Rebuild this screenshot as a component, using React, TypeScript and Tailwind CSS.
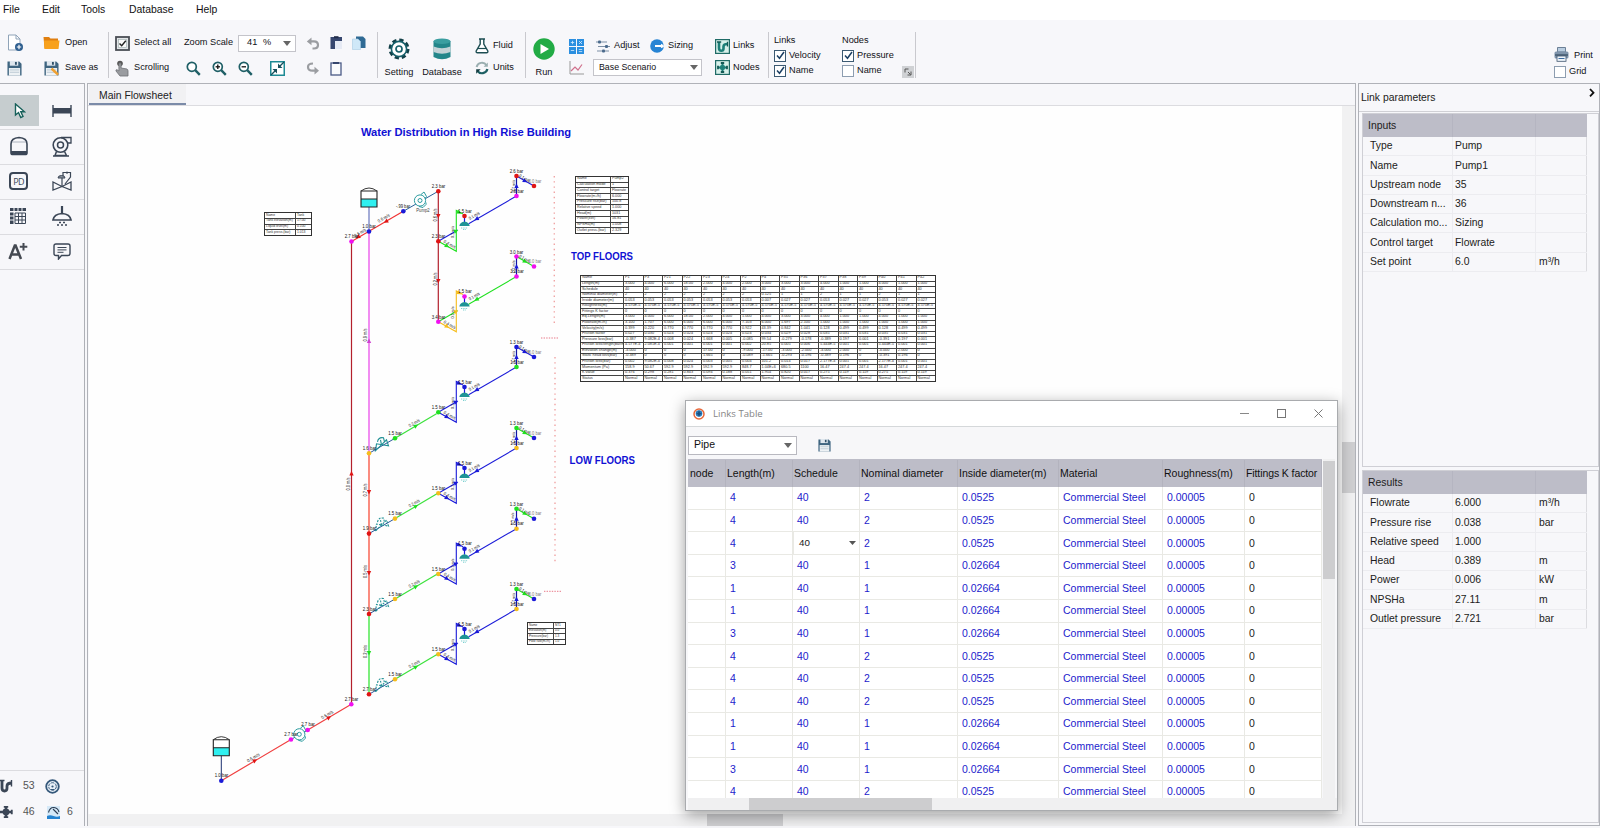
import React from "react";

const NAVY = "#3b4656";
const TEAL = "#1f5f66";

/* ---------- toolbar icons ---------- */

function Svg({ w, h, vb, children }: { w: number; h: number; vb?: string; children: React.ReactNode }) {
  return (
    <svg width={w} height={h} viewBox={vb ?? `0 0 ${w} ${h}`} fill="none" className="shrink-0">
      {children}
    </svg>
  );
}

const Floppy = ({ pencil = false, size = 15 }: { pencil?: boolean; size?: number }) => (
  <Svg w={size} h={size} vb="0 0 16 16">
    <path d="M0.5 0.5H13L15.5 3V15.5H0.5Z" fill="#3f6580" />
    <rect x="3" y="0" width="9" height="5" fill="#dfe7ee" />
    <rect x="8.5" y="1" width="2" height="3" fill="#2f5068" />
    <rect x="2" y="7.5" width="12" height="8" fill="#eef2f5" />
    <path d="M3 9.5H13M3 12H13" stroke="#b9c8d2" />
    {pencil && <path d="M8 8L15 14.5" stroke="#f0a030" strokeWidth="2.6" />}
  </Svg>
);

const NewFile = () => (
  <Svg w={17} h={18}>
    <path d="M1.5 1H9L13 5V16H1.5Z" fill="#fff" stroke="#8fa3b8" />
    <path d="M9 1V5H13" stroke="#8fa3b8" />
    <circle cx="12" cy="13" r="4" fill="#2f5f8f" />
    <path d="M12 10.8V15.2M9.8 13H14.2" stroke="#fff" strokeWidth="1.2" />
  </Svg>
);

const Folder = () => (
  <Svg w={17} h={14}>
    <path d="M0.5 1H6L7.5 2.5H15V12.5H1.5Z" fill="#e07f10" />
    <path d="M1.5 13L1 4.5H16.5L15.5 13Z" fill="#f8a11c" />
  </Svg>
);

const SelectAllIcon = () => (
  <Svg w={15} h={15}>
    <rect x="1" y="1" width="13" height="13" fill="#e3e5e8" stroke="#4a4e55" strokeWidth="1.8" />
    <rect x="3.5" y="3.5" width="8" height="8" fill="#fafafa" stroke="#9aa" strokeWidth="0.6" />
    <path d="M4.5 7.5L6.7 9.8L10.8 4.8" stroke="#222" strokeWidth="1.4" />
  </Svg>
);

const HandIcon = () => (
  <Svg w={14} h={17}>
    <circle cx="5" cy="3.5" r="2.8" fill="#555" />
    <path d="M3.9 3.5Q5 2 6.1 3.5V8L12 9Q13 9.5 13 11V16H5L1 11Q0.5 9.5 2 9.7L3.9 11Z" fill="#9a9ca0" stroke="#6d7075" strokeWidth="0.8" />
  </Svg>
);

const Magnifier = ({ sign }: { sign?: "+" | "-" }) => (
  <Svg w={15} h={15}>
    <circle cx="5.8" cy="5.8" r="4.5" stroke={TEAL} strokeWidth="1.7" fill="#fff" />
    <path d="M9.2 9.2L13.8 13.8" stroke={TEAL} strokeWidth="2.4" />
    {sign && <path d="M3.6 5.8H8" stroke="#111" strokeWidth="1.3" />}
    {sign === "+" && <path d="M5.8 3.6V8" stroke="#111" strokeWidth="1.3" />}
  </Svg>
);

const FitIcon = () => (
  <Svg w={15} h={15}>
    <rect x="0.75" y="0.75" width="13.5" height="13.5" stroke="#1d8a94" strokeWidth="1.5" fill="#fff" />
    <path d="M14 1L9.5 5.5M1 14L5.5 9.5" stroke="#174f5c" strokeWidth="1.4" />
    <path d="M8 2.5V7H12.5ZM2.5 8H7V12.5Z" fill="#174f5c" />
  </Svg>
);

const CurveArrow = ({ redo = false }: { redo?: boolean }) => (
  <Svg w={14} h={13}>
    {redo ? (
      <>
        <path d="M7 1.5Q2 1.5 2 5Q2 8.7 6.5 8.7H9.5" stroke="#9b9da1" strokeWidth="2.2" />
        <path d="M8.5 4.8V12.6L13 8.7Z" fill="#9b9da1" />
      </>
    ) : (
      <>
        <path d="M4 4.4H8Q12 4.4 12 8Q12 11.5 8 11.5H6.5" stroke="#9b9da1" strokeWidth="2.2" />
        <path d="M5.5 0.5V8.3L0.8 4.4Z" fill="#9b9da1" />
      </>
    )}
  </Svg>
);

const Cut = () => (
  <Svg w={13} h={14}>
    <path d="M0.5 1H12V5H5V13H0.5Z" fill="#36466e" />
    <rect x="4" y="0.2" width="4.5" height="2" fill="#202b48" />
    <path d="M5 5H12V13H5Z" fill="#e6eaf4" />
  </Svg>
);
const Copy = () => (
  <Svg w={14} h={14}>
    <path d="M4 0.5H11L13.5 3V12H4Z" fill="#2f6a94" />
    <path d="M0.5 3H6L8.5 5.5V13.5H0.5Z" fill="#cfe8f8" stroke="#a8cbe2" strokeWidth="0.6" />
  </Svg>
);
const Paste = () => (
  <Svg w={12} h={15}>
    <rect x="1" y="2" width="10" height="12" stroke="#4a5a86" strokeWidth="1.3" fill="#fafbfd" />
    <rect x="3" y="1" width="6" height="2" fill="#36466e" />
  </Svg>
);

const Gear = () => (
  <Svg w={22} h={22}>
    <circle cx="11" cy="11" r="9" stroke="#123f47" strokeWidth="3" strokeDasharray="4.2 2.87" />
    <circle cx="11" cy="11" r="7.6" stroke="#17606a" strokeWidth="1.6" fill="#fff" />
    <circle cx="11" cy="11" r="3" stroke="#17606a" strokeWidth="1.7" />
  </Svg>
);

const Cylinder = () => (
  <Svg w={18} h={22}>
    <path d="M0.5 3V19Q9 23.5 17.5 19V3Z" fill="#23868a" />
    <ellipse cx="9" cy="3.2" rx="8.5" ry="2.8" fill="#3a9ea0" />
    <path d="M0.5 8.5Q9 12 17.5 8.5V14Q9 17.5 0.5 14Z" fill="#c3d2d6" />
  </Svg>
);

const Flask = () => (
  <Svg w={14} h={16}>
    <path d="M4 1H10M5.2 1V6L1.2 13Q0.8 14.8 2.5 14.8H11.5Q13.2 14.8 12.8 13L8.8 6V1" stroke="#1d4d52" strokeWidth="1.4" fill="#fff" />
    <path d="M3 10.5H11" stroke="#1d4d52" strokeWidth="1.2" />
  </Svg>
);

const Cycle = () => (
  <Svg w={14} h={14}>
    <path d="M1.6 6A5.5 5.5 0 0 1 11.5 4.2" stroke="#9aaeb0" strokeWidth="2" />
    <path d="M12.4 8A5.5 5.5 0 0 1 2.5 9.8" stroke="#1d5f62" strokeWidth="2.2" />
    <path d="M12.8 1.5V5.8H8.6Z" fill="#9aaeb0" />
    <path d="M1.2 12.8V8.3H5.6Z" fill="#143c40" />
  </Svg>
);

const Calc = () => (
  <Svg w={15} h={15}>
    <path d="M0 0H7V7H0ZM8 0H15V7H8ZM0 8H7V15H0ZM8 8H15V15H8Z" fill="#2b8fe0" />
    <path d="M1.8 3.5H5.2M3.5 1.8V5.2M10 2L13 5M13 2L10 5M1.8 11.5H5.2M9.8 10.5H13.2M9.8 12.6H13.2" stroke="#d8ecfc" strokeWidth="0.8" />
  </Svg>
);

const ChartIcon = () => (
  <Svg w={15} h={14}>
    <path d="M1 0V13H15" stroke="#999" />
    <path d="M2 10L6 6L9 9L13 3.5" stroke="#d0708c" strokeWidth="1.2" />
  </Svg>
);

const Sliders = () => (
  <Svg w={14} h={13}>
    <path d="M0 2H11M2 6.5H14M1 11H13" stroke="#7d90a6" strokeWidth="1.2" />
    <rect x="2" y="0.5" width="3" height="3" rx="1" fill="#4b6a8c" />
    <rect x="9" y="5" width="3" height="3" rx="1" fill="#4b6a8c" />
    <rect x="6" y="9.5" width="3" height="3" rx="1" fill="#4b6a8c" />
  </Svg>
);

const PipeBox = () => (
  <Svg w={15} h={15}>
    <rect x="0.6" y="0.6" width="13.8" height="13.8" fill="#d7f0ea" stroke="#1f6b66" strokeWidth="1.2" />
    <path d="M4 3V9Q4 11.8 6.3 11.8Q8.5 11.8 8.5 9.5V7.5Q8.5 5 12.5 5" stroke="#1d7f78" strokeWidth="2.6" />
    <path d="M2 3H6.2M12.5 2.8V7.5" stroke="#145a56" strokeWidth="1.3" />
  </Svg>
);

const NodeBox = () => (
  <Svg w={15} h={15}>
    <rect x="0.6" y="0.6" width="13.8" height="13.8" fill="#d7f0ea" stroke="#1f6b66" strokeWidth="1.2" />
    <circle cx="7.5" cy="7.5" r="2.8" fill="#2a9088" />
    <path d="M7.5 3V12M3 7.5H12" stroke="#1d7f78" strokeWidth="2" />
    <path d="M5.8 3H9.2M5.8 12H9.2M3 5.8V9.2M12 5.8V9.2" stroke="#145a56" strokeWidth="1.8" />
  </Svg>
);

const Printer = () => (
  <Svg w={15} h={15}>
    <path d="M3.5 0.5H11.5V5H3.5Z" fill="#b9cde0" stroke="#51677f" strokeWidth="0.8" />
    <rect x="0.5" y="4.5" width="14" height="7" rx="1.5" fill="#7f94ab" />
    <path d="M1 8H14" stroke="#41566c" strokeWidth="1.4" />
    <rect x="3" y="9" width="9" height="5.3" fill="#eef4fa" stroke="#3f566e" strokeWidth="0.8" />
    <path d="M4.5 11.5H10.5" stroke="#3a6aa0" />
  </Svg>
);

const Caret = () => (
  <svg width="8" height="5" viewBox="0 0 8 5" className="shrink-0">
    <path d="M0 0H8L4 5Z" fill="#666" />
  </svg>
);

function Check({ on }: { on?: boolean }) {
  return (
    <span className={`flex h-[12px] w-[12px] shrink-0 items-center justify-center border bg-white ${on ? "border-[#3c5a72]" : "border-[#8d9db0]"}`}>
      {on && (
        <Svg w={9} h={9}>
          <path d="M1 4.5L3.5 7.2L8 1" stroke="#1c3f63" strokeWidth="1.5" />
        </Svg>
      )}
    </span>
  );
}

const Divider = () => <div className="mt-[12px] h-[46px] w-px shrink-0 bg-[#c9c9ce]" />;

/* Two stacked rows of a ribbon group; tight groups have their rows closer together */
function Stack({ w, a, b, tight }: { w: string; a: React.ReactNode; b: React.ReactNode; tight?: boolean }) {
  return (
    <div className={`grid shrink-0 ${tight ? "grid-rows-[22px_21px] pt-[15px]" : "grid-rows-[25px_25px] pt-[10.5px]"} ${w}`}>
      <div className="flex items-center">{a}</div>
      <div className="flex items-center">{b}</div>
    </div>
  );
}

const Slot = ({ w, children }: { w: string; children: React.ReactNode }) => (
  <span className={`flex shrink-0 items-center ${w}`}>{children}</span>
);

function Big({ w, icon, label }: { w: string; icon: React.ReactNode; label: string }) {
  return (
    <div className={`flex shrink-0 flex-col items-center pt-[18px] ${w}`}>
      <div className="flex h-[22px] items-center">{icon}</div>
      <span className="mt-[6px] leading-[12px] tracking-[0.05px]">{label}</span>
    </div>
  );
}

function Ribbon() {
  return (
    <div className="flex h-[63px] shrink-0 whitespace-nowrap text-[9.2px] text-[#111116]">
      <Stack w="w-[43px] pl-[7px]" a={<NewFile />} b={<Floppy />} />
      <Stack
        w="w-[65px]"
        a={<><Slot w="w-[22px]"><Folder /></Slot>Open</>}
        b={<><Slot w="w-[22px] pl-[1px]"><Floppy pencil /></Slot>Save as</>}
      />
      <Divider />
      <Stack
        w="w-[75px] pl-[6px]"
        a={<><Slot w="w-[19px]"><SelectAllIcon /></Slot>Select all</>}
        b={<><Slot w="w-[19px]"><HandIcon /></Slot>Scrolling</>}
      />
      <Stack
        w="w-[122px]"
        a={
          <>
            <Slot w="w-[54px]">Zoom Scale</Slot>
            <div className="flex h-[17px] w-[58px] items-center justify-between border border-[#c4c4ca] bg-white pl-[8px] pr-[4px]">
              <span className="tracking-[0.2px]">41&nbsp; %</span>
              <Caret />
            </div>
          </>
        }
        b={
          <>
            <Slot w="w-[26px] pl-[2px]"><Magnifier /></Slot>
            <Slot w="w-[26px] pl-[2px]"><Magnifier sign="+" /></Slot>
            <Slot w="w-[34px] pl-[2px]"><Magnifier sign="-" /></Slot>
            <FitIcon />
          </>
        }
      />
      <Stack
        w="w-[71px]"
        a={<><Slot w="w-[24px]"><CurveArrow /></Slot><Slot w="w-[22px]"><Cut /></Slot><Copy /></>}
        b={<><Slot w="w-[24px]"><CurveArrow redo /></Slot><Paste /></>}
      />
      <Divider />
      <Big w="w-[42px]" icon={<Gear />} label="Setting" />
      <Big w="w-[44px]" icon={<Cylinder />} label="Database" />
      <Stack
        tight
        w="w-[61px] pl-[11px]"
        a={<><Slot w="w-[18px]"><Flask /></Slot>Fluid</>}
        b={<><Slot w="w-[18px]"><Cycle /></Slot>Units</>}
      />
      <Divider />
      <Big
        w="w-[36px]"
        icon={
          <Svg w={22} h={22}>
            <circle cx="11" cy="11" r="10.7" fill="#22ab45" />
            <path d="M7.5 6L16 11L7.5 16Z" fill="#fff" />
          </Svg>
        }
        label="Run"
      />
      <Stack tight w="w-[24px] pl-[7px]" a={<Calc />} b={<ChartIcon />} />
      <Stack
        tight
        w="w-[128px] pl-[7px]"
        a={
          <>
            <Slot w="w-[20px] pl-[3px]"><Sliders /></Slot>
            <Slot w="w-[37px] pl-[1px]">Adjust</Slot>
            <Slot w="w-[18px]">
              <Svg w={14} h={14}>
                <circle cx="7" cy="7" r="6.8" fill="#2784d4" />
                <path d="M5 7H13M11 5.5L13 7L11 8.5" stroke="#fff" strokeWidth="1.8" />
              </Svg>
            </Slot>
            Sizing
          </>
        }
        b={
          <div className="flex h-[17px] w-[109px] items-center justify-between border border-[#c4c4ca] bg-white pl-[5px] pr-[3px] text-[8.8px]">
            Base Scenario
            <Caret />
          </div>
        }
      />
      <Stack
        tight
        w="w-[54px] pl-[1px]"
        a={<><Slot w="w-[18px]"><PipeBox /></Slot>Links</>}
        b={<><Slot w="w-[18px]"><NodeBox /></Slot>Nodes</>}
      />
      <Divider />
      <div className="grid w-[69px] shrink-0 grid-rows-[15px_15px_15px] pl-[5px] pt-[13px]">
        <div className="flex items-center">Links</div>
        <div className="flex items-center gap-[3px]"><Check on />Velocity</div>
        <div className="flex items-center gap-[3px]"><Check on />Name</div>
      </div>
      <div className="grid w-[59px] shrink-0 grid-rows-[15px_15px_15px] pt-[13px] pl-[4px]">
        <div className="flex items-center">Nodes</div>
        <div className="flex items-center gap-[3px]"><Check on />Pressure</div>
        <div className="flex items-center gap-[3px]"><Check />Name</div>
      </div>
      <div className="flex w-[18px] shrink-0 items-start pt-[46px] pl-[5px]">
        <span className="flex h-[12px] w-[12px] items-center justify-center bg-[#cfd1d4]">
          <Svg w={8} h={8}>
            <path d="M1 4.5V1H4.5M7 3.5V7H3.5M4 4L6.5 6.5" stroke="#555" />
          </Svg>
        </span>
      </div>
      <Divider />
      <div className="flex-1" />
      <div className="grid w-[48px] shrink-0 grid-rows-[17px_16px] pt-[26px] pl-[2px]">
        <div className="flex items-center gap-[5px]"><Printer /><span className="pt-[3px]">Print</span></div>
        <div className="flex items-center gap-[3px] pt-[2px]"><Check />Grid</div>
      </div>
    </div>
  );
}

/* ---------- left tool palette ---------- */

const tools: React.ReactNode[][] = [
  [
    <Svg w={12} h={16}>
      <path d="M1.5 1V12L4.5 9.5L6.8 14.5L9 13.5L6.8 8.8H10.5Z" fill="#fff" stroke="#17605a" strokeWidth="1.4" />
    </Svg>,
    <Svg w={20} h={14}>
      <path d="M1 1V13M19 1V13" stroke={NAVY} strokeWidth="1.4" />
      <rect x="1" y="4" width="18" height="5.5" fill={NAVY} />
    </Svg>,
  ],
  [
    <Svg w={18} h={20}>
      <path d="M1 17V8Q1 2 9 1.5Q17 2 17 8V17Q17 18.5 15 18.5H3Q1 18.5 1 17Z" stroke={NAVY} strokeWidth="1.6" />
      <path d="M2 6H16" stroke="#9aa2ad" strokeWidth="0.8" />
      <rect x="1" y="15" width="16" height="3.8" fill={NAVY} />
    </Svg>,
    <Svg w={20} h={21}>
      <circle cx="8.5" cy="9" r="7.3" stroke={NAVY} strokeWidth="1.6" />
      <circle cx="8.5" cy="9" r="3" stroke={NAVY} strokeWidth="1.5" />
      <path d="M9 1.5H19V7H15" stroke={NAVY} strokeWidth="1.3" />
      <path d="M4.5 15.5L3 19.5H14.5L12.5 15.5M1 20H17" stroke={NAVY} strokeWidth="1.5" />
    </Svg>,
  ],
  [
    <span className="flex h-[18px] w-[19px] items-center justify-center rounded-[4px] border-2 border-[#3b4656] font-['Open_Sans',sans-serif] text-[9px] leading-none tracking-[-0.6px] text-[#3b4656]">PD</span>,
    <Svg w={20} h={20}>
      <path d="M1 11V19L10 15.5L19 11V19L10 15.5Z" stroke={NAVY} strokeWidth="1.3" />
      <path d="M10 15V6.5M11 5V1.5H18.5V6L13 13" stroke={NAVY} strokeWidth="1.2" />
      <path d="M6 7Q6 4.5 9.5 4.5Q13 4.5 13 7Z" fill="#8b939e" stroke={NAVY} />
      <path d="M15 0.5V3" stroke={NAVY} />
    </Svg>,
  ],
  [
    <Svg w={17} h={17}>
      <path d="M0 0H3.5V3H0ZM4.5 0H7.5V3H4.5ZM8.5 0H11.5V3H8.5ZM12.5 0H16V3H12.5ZM0 4.5H3.5V7.5H0ZM0 8.5H3.5V11.5H0ZM0 12.5H3.5V16H0Z" fill={NAVY} />
      <path d="M5 5H15.5V15.5H5ZM8.5 5V15.5M12 5V15.5M5 8.5H15.5M5 12H15.5" stroke={NAVY} />
    </Svg>,
    <Svg w={20} h={20}>
      <path d="M10 0V8" stroke={NAVY} strokeWidth="2.2" />
      <path d="M1 14Q2 8 10 7.5Q18 8 19 14Z" stroke={NAVY} strokeWidth="1.7" />
      <path d="M7 16.5H9M11 16.5H13M5 19H7M9 19H11M13 19H15" stroke={NAVY} strokeWidth="1.4" />
    </Svg>,
  ],
  [
    <Svg w={21} h={18}>
      <path d="M1.5 17L6.8 3.5H7.6L13 17M3.6 12.5H10.8" stroke="#454a52" strokeWidth="2.5" />
      <path d="M15.5 1V8.5M11.8 4.7H19.3" stroke="#454a52" strokeWidth="2" />
    </Svg>,
    <Svg w={18} h={17}>
      <path d="M3 1H15Q17 1 17 3V10.5Q17 12.5 15 12.5H8.5L5.5 16V12.5H3Q1 12.5 1 10.5V3Q1 1 3 1Z" stroke={NAVY} strokeWidth="1.4" />
      <path d="M4.5 4.5H13.5M4.5 6.9H13.5M4.5 9.3H10.5" stroke={NAVY} strokeWidth="1" />
    </Svg>,
  ],
];

function Palette() {
  return (
    <aside className="flex w-[85px] shrink-0 flex-col border-r border-t border-[#aeb0b6] text-[10.5px] text-[#555]">
      <div className="pt-[10px]">
        {tools.map((row, i) => (
          <div key={i} className={`flex w-full border-b border-[#dcdce0] ${i === 0 ? "h-[36px]" : "h-[35px]"}`}>
            <div className={`flex w-[39px] items-center justify-center ${i === 0 ? "mt-px h-[31px] bg-[#c6cdcf] pt-px pl-px" : "pb-[2px] pr-[2px]"}`}>{row[0]}</div>
            <div className="flex w-[45px] items-center justify-center pb-[2px]">{row[1]}</div>
          </div>
        ))}
      </div>
      <div className="flex-1" />
      <div className="grid h-[56px] grid-rows-[30px_22px] border-t border-[#dcdce0]">
        <div className="flex items-center">
          <Slot w="w-[23px]">
            <Svg w={13} h={14}>
              <path d="M2 2V9Q2 12 4.5 12Q7 12 7 9V7Q7 4 12 4" stroke={NAVY} strokeWidth="2.8" />
              <path d="M0 1.5H4.5M11.5 1V7.5" stroke={NAVY} strokeWidth="1.4" />
            </Svg>
          </Slot>
          <Slot w="w-[22px]">53</Slot>
          <Svg w={15} h={15}>
            <circle cx="7.5" cy="7.5" r="6.3" stroke="#35587a" strokeWidth="1.8" fill="#e8f0f8" />
            <circle cx="7.5" cy="7.5" r="3.8" stroke="#35587a" strokeWidth="1" strokeDasharray="3 1" />
            <circle cx="7.5" cy="7.5" r="1.1" fill="#35587a" />
            <path d="M5.5 10.5H9.5" stroke="#35587a" />
          </Svg>
        </div>
        <div className="flex items-center">
          <Slot w="w-[23px]">
            <Svg w={14} h={14}>
              <circle cx="6" cy="7" r="3.4" fill={NAVY} />
              <path d="M6 1.5V12.5M0 7H12" stroke={NAVY} strokeWidth="2.4" />
              <path d="M3.8 1.8H8.2M3.8 12.2H8.2M11.8 4.8V9.2" stroke={NAVY} strokeWidth="1.8" />
            </Svg>
          </Slot>
          <Slot w="w-[24px]">46</Slot>
          <Slot w="w-[20px]">
            <Svg w={13} h={13}>
              <rect width="13" height="13" fill="#d5e9f8" />
              <path d="M0 10Q3 8.5 6.5 10Q10 11.5 13 10V13H0Z" fill="#2583d0" />
              <path d="M1.5 6.5Q3 1 7 1.5Q11 2 12 6M6 3L11 8" stroke="#2c3e54" strokeWidth="1.1" />
            </Svg>
          </Slot>
          6
        </div>
      </div>
    </aside>
  );
}

/* ---------- flowsheet drawing ---------- */

const BLUE = "#1a1ad8";
const GREEN = "#1fe01f";
const MAG = "#f010f0";
const RED = "#e01414";
const GOLD = "#f5bd1c";

const Dot = ({ x, y, c }: { x: number; y: number; c: string }) => <circle cx={x} cy={y} r="2.3" fill={c} />;

function T({ x, y, s, r = 0, w, c = "#111", size = 4.6 }: { x: number; y: number; s: string; r?: number; w?: number; c?: string; size?: number }) {
  return (
    <text x={x} y={y} fontSize={size} fill={c} textAnchor="middle" textLength={w} lengthAdjust="spacingAndGlyphs" transform={r ? `rotate(${r} ${x} ${y})` : undefined}>
      {s}
    </text>
  );
}

const Arrow = ({ x, y, r, c }: { x: number; y: number; r: number; c: string }) => (
  <path d="M-2 -2.2L2.4 0L-2 2.2Z" fill={c} transform={`translate(${x} ${y}) rotate(${r})`} />
);

const Tank = ({ x, y }: { x: number; y: number }) => (
  <g>
    <path d={`M${x} ${y + 3}Q${x + 8} ${y - 3} ${x + 16} ${y + 3}`} stroke="#222" strokeWidth="0.9" fill="#fff" />
    <rect x={x} y={y + 3} width="16" height="16" fill="#fff" />
    <rect x={x} y={y + 11} width="16" height="8" fill="#2ff0f0" />
    <path d={`M${x} ${y + 3}H${x + 16}V${y + 19}H${x}ZM${x} ${y + 11}H${x + 16}`} stroke="#222" strokeWidth="1.1" />
  </g>
);

const PumpMark = ({ x, y }: { x: number; y: number }) => (
  <g stroke="#2b9ca0" strokeWidth="1" fill="none">
    <circle cx={x} cy={y} r="5.6" fill="#fff" />
    <circle cx={x} cy={y} r="2" />
    <path d={`M${x + 1} ${y - 6}L${x + 4} ${y - 8.5}L${x + 6.5} ${y - 4}L${x + 5} ${y - 2}M${x - 1} ${y + 6}L${x + 3} ${y + 7}L${x + 6} ${y + 4}V${y + 2}`} />
  </g>
);

const ValveMark = ({ x, y, dash }: { x: number; y: number; dash?: boolean }) => (
  <g stroke="#1f9094" strokeWidth="1.1" fill="none" strokeDasharray={dash ? "2 1.2" : undefined}>
    <path d={`M${x - 6} ${y + 6}L${x - 5} ${y - 1}L${x + 7} ${y + 1}L${x + 5} ${y - 5}Z`} />
    <path d={`M${x} ${y}L${x - 1} ${y - 5}M${x - 4} ${y - 3}Q${x - 3} ${y - 8} ${x + 2} ${y - 7}L${x + 3} ${y - 3}`} />
  </g>
);

interface Branch {
  y: number;
  main: string;
  tri: string;
  tip: string;
  tipLink: string;
  base: string;
  end: string;
  root: string;
  spr: string;
  p: string[];
}

const branches: Branch[] = [
  { y: 176, main: BLUE, tri: GREEN, tip: RED, tipLink: BLUE, base: MAG, end: RED, root: RED, spr: RED, p: ["2.6 bar", "2.8 bar", "2.3 bar"] },
  { y: 256.5, main: GREEN, tri: GOLD, tip: MAG, tipLink: GREEN, base: MAG, end: MAG, root: MAG, spr: MAG, p: ["3.0 bar", "3.2 bar", "3.4 bar"] },
  { y: 347, main: BLUE, tri: BLUE, tip: BLUE, tipLink: BLUE, base: GREEN, end: BLUE, root: GREEN, spr: BLUE, p: ["1.3 bar", "1.5 bar", "1.5 bar"] },
  { y: 428, main: BLUE, tri: BLUE, tip: GREEN, tipLink: GREEN, base: GOLD, end: BLUE, root: GOLD, spr: BLUE, p: ["1.3 bar", "1.5 bar", "1.5 bar"] },
  { y: 508.7, main: BLUE, tri: BLUE, tip: GREEN, tipLink: GREEN, base: GOLD, end: BLUE, root: GOLD, spr: BLUE, p: ["1.3 bar", "1.5 bar", "1.5 bar"] },
  { y: 589, main: BLUE, tri: BLUE, tip: GREEN, tipLink: GREEN, base: GOLD, end: BLUE, root: GOLD, spr: BLUE, p: ["1.3 bar", "1.5 bar", "1.5 bar"] },
];

function BranchMark({ b }: { b: Branch }) {
  const y = b.y;
  return (
    <g>
      <path d={`M438.3 ${y + 65.3}L516.5 ${y + 20}`} stroke={b.main} strokeWidth="1.1" />
      <rect x="457.5" y={y + 42} width="11" height="14" fill="#fff" />
      <path d={`M438.3 ${y + 65.3}L456.3 ${y + 75.3}V${y + 34.5}L463 ${y + 38}`} stroke={b.tri} strokeWidth="1.1" fill="none" />
      <path d={`M516.5 ${y + 20}V${y}`} stroke="#1414a0" strokeWidth="1.2" />
      <path d={`M516.5 ${y}L534 ${y + 10}`} stroke={b.tipLink} strokeWidth="1.1" />
      <Arrow x={525} y={y + 5} r={30} c={b.tipLink} />
      <Arrow x={516.5} y={y + 10} r={-90} c={BLUE} />
      <Arrow x={456} y={y + 55} r={-20} c={b.tri} />
      <Arrow x={447} y={y + 70} r={30} c={b.tri} />
      <Arrow x={476.5} y={y + 43} r={150} c={b.main} />
      <Arrow x={459} y={y + 36.5} r={30} c={b.tri} />
      <path d={`M464.5 ${y + 40}V${y + 46}`} stroke={BLUE} strokeWidth="1.2" />
      <path d={`M459.3 ${y + 50}Q460 ${y + 46} 464.5 ${y + 45.5}Q469 ${y + 46} 469.7 ${y + 50}Z`} fill="#1f9496" />
      <path d={`M461 ${y + 52}H468M463 ${y + 53.5}H466`} stroke="#5cc4c4" strokeWidth="0.8" strokeDasharray="1.3 1" />
      <Dot x={516.5} y={y} c={b.tip} />
      <Dot x={516.5} y={y + 20} c={b.base} />
      <Dot x={534} y={y + 10} c={b.end} />
      <Dot x={438.3} y={y + 65.3} c={b.root} />
      <Dot x={464.5} y={y + 40} c={b.spr} />
      <T x={516.5} y={y - 3} s={b.p[0]} w={13.5} />
      <T x={517} y={y + 16.5} s={b.p[1]} w={13.5} />
      <T x={438.5} y={y + 62} s={b.p[2]} w={13.5} />
      <T x={465} y={y + 36.5} s="1.5 bar" w={13.5} />
      <T x={535} y={y + 6.5} s="0.0 bar" w={12.5} c="#777" />
      <T x={524} y={y + 3.5} s="0.1 m/s" w={12} r={30} size={4.2} />
      <T x={514.5} y={y + 10} s="0.7 m/s" w={12} r={-90} size={4.4} />
      <T x={475} y={y + 41} s="0.1 m/s" w={12} r={-30} size={4.4} />
      <T x={454.3} y={y + 56} s="0.1 m/s" w={12} r={-90} size={4.4} />
      <T x={449} y={y + 69.5} s="0.4 m/s" w={13} r={30} size={4.4} />
    </g>
  );
}

const feeds = [
  { y: 453.3, n: GOLD, m: GREEN, label: "1.6 bar" },
  { y: 533.6, n: RED, m: GOLD, label: "1.9 bar" },
  { y: 614, n: RED, m: GOLD, label: "2.3 bar" },
  { y: 694.3, n: RED, m: GOLD, label: "2.7 bar" },
];

function Diagram() {
  return (
    <svg width="1253" height="709" viewBox="89 105 1253 709" fill="none" fontFamily="'Liberation Sans', Arial, sans-serif" className="block">
      <g fontWeight="700" fill="#1010d4">
        <text x="361" y="136" fontSize="11.2" textLength="210">Water Distribution in High Rise Building</text>
        <text x="571" y="260" fontSize="10.6" textLength="62" lengthAdjust="spacingAndGlyphs">TOP FLOORS</text>
        <text x="569.5" y="464.2" fontSize="10.6" textLength="65.5" lengthAdjust="spacingAndGlyphs">LOW FLOORS</text>
      </g>
      <g stroke="#f0a4a4" strokeWidth="1.4" strokeDasharray="1.4 3.8">
        <path d="M554.3 176V323M555 357V565" />
        <path d="M541 338H558M544 591.3H562" stroke="#e87888" strokeWidth="1" strokeDasharray="1.4 1.2" />
      </g>

      <path d="M351.5 241.5V704.3" stroke="#b3202c" strokeWidth="1.2" />
      <path d="M369 231.5V453.3" stroke="#ee70ee" strokeWidth="1.6" />
      <path d="M369 453.3V614" stroke="#fa7f72" strokeWidth="1.8" />
      <path d="M369 614V694.3" stroke="#5cea5c" strokeWidth="1.6" />
      <path d="M438.3 191.2V322" stroke="#b3202c" strokeWidth="1.2" />
      <path d="M369 207V231.5" stroke="#4a5ab0" strokeWidth="1" />
      <path d="M351.5 241.5L403.3 211.3" stroke="#f03434" strokeWidth="1.2" />
      <path d="M403.3 211.3L438.3 191.2" stroke="#2a5f98" strokeWidth="1" />
      <path d="M221.3 780.7L291 739.5M307.7 730L351.3 704.3" stroke="#f04040" strokeWidth="1.2" />
      <path d="M291 739.5L307.7 730" stroke="#2a5f98" strokeWidth="1" />
      <path d="M221.3 755V780.7" stroke="#1c3070" strokeWidth="1" />

      <Arrow x={351.5} y={473.5} r={-90} c={RED} />
      <Arrow x={369} y={341} r={-90} c="#d040d0" />
      <Arrow x={369} y={492} r={90} c={RED} />
      <Arrow x={369} y={573} r={90} c={RED} />
      <Arrow x={369} y={653} r={90} c={GREEN} />
      <Arrow x={438.3} y={216} r={90} c={RED} />
      <Arrow x={438.3} y={281} r={90} c={RED} />
      <Arrow x={386} y={221.5} r={150} c={RED} />
      <Arrow x={358} y={237} r={150} c={RED} />
      <Arrow x={255} y={760.5} r={-30} c={RED} />
      <Arrow x={329} y={717.5} r={-30} c={RED} />
      <T x={349.5} y={484} s="0.0 m/s" r={-90} w={13} />
      <T x={367} y={335} s="0.9 m/s" r={-90} w={13} />
      <T x={367} y={490} s="0.7 m/s" r={-90} w={13} />
      <T x={367} y={571.5} s="0.5 m/s" r={-90} w={13} />
      <T x={367} y={651.5} s="0.2 m/s" r={-90} w={13} />
      <T x={436.7} y={215} s="0.6 m/s" r={-90} w={13} />
      <T x={436.7} y={279} s="0.2 m/s" r={-90} w={13} />
      <T x={384.5} y={219.5} s="0.6 m/s" r={-30} w={13} />
      <T x={361} y={234} s="0.6 m/s" r={-30} w={13} />
      <T x={254} y={759} s="0.6 m/s" r={-30} w={14} />
      <T x={328} y={716} s="0.6 m/s" r={-30} w={13} />

      <Tank x={361} y={188} />
      <Tank x={213.3} y={736.7} />
      <PumpMark x={420} y={200.5} />
      <PumpMark x={299.3} y={734.3} />
      <T x={423} y={211.5} s="Pump2" w={13.5} c="#444" />

      {branches.map((b) => (
        <BranchMark key={b.y} b={b} />
      ))}

      {feeds.map((f, i) => (
        <g key={f.y}>
          <path d={`M369 ${f.y}L395 ${f.y - 15}`} stroke="#28559a" strokeWidth="1" />
          <path d={`M395 ${f.y - 15}L436.5 ${f.y - 39.5}`} stroke="#3de23d" strokeWidth="1.2" />
          <ValveMark x={381.5} y={f.y - 8.5} dash={i > 0} />
          <Arrow x={416} y={f.y - 27.5} r={-30} c={GREEN} />
          <Dot x={395} y={f.y - 15} c={f.m} />
          <Dot x={369} y={f.y} c={f.n} />
          <T x={369.5} y={f.y - 3.5} s={f.label} w={13.5} />
          <T x={395} y={f.y - 18.5} s="1.5 bar" w={13.5} />
          <T x={415} y={f.y - 29} s="0.2 m/s" r={-30} w={12} />
        </g>
      ))}
      <Dot x={438.3} y={191.2} c={RED} />
      <Dot x={403.3} y={211.3} c={BLUE} />
      <Dot x={369} y={231.5} c={BLUE} />
      <Dot x={351.5} y={241.5} c={MAG} />
      <Dot x={351.3} y={704.3} c={MAG} />
      <Dot x={307.7} y={730} c={MAG} />
      <Dot x={291} y={739.5} c={MAG} />
      <Dot x={221.3} y={780.7} c={BLUE} />
      <T x={438.5} y={187.5} s="2.3 bar" w={13.5} />
      <T x={403} y={208} s="-.99 bar" w={14} />
      <T x={369} y={228} s="1.0 bar" w={13.5} />
      <T x={351.5} y={238} s="2.7 bar" w={13.5} />
      <T x={351.5} y={701} s="2.7 bar" w={13.5} />
      <T x={308} y={726} s="2.7 bar" w={13.5} />
      <T x={291} y={736} s="2.7 bar" w={13.5} />
      <T x={221.5} y={777} s="1.0 bar" w={13.5} />
    </svg>
  );
}

function MiniTable({ pos, cols, rows }: { pos: string; cols: string; rows: string[][] }) {
  return (
    <div className={`absolute grid auto-rows-fr gap-px border border-[#333] bg-[#444] leading-none text-[#333] ${pos} ${cols}`}>
      {rows.flatMap((r, i) =>
        r.map((c, j) => (
          <div key={`${i}-${j}`} className="flex min-h-0 min-w-0 items-center whitespace-nowrap bg-white pl-px">
            {c}
          </div>
        ))
      )}
    </div>
  );
}

const bigTable: string[][] = [
  "Name|P1|P3|P21|P22|P23|P24|P2|P4|P35|P36|P37|P38|P39|P40|P41|P42",
  "Length(m)|3.000|4.000|6.000|18.00|2.000|4.000|2.000|3.000|3.000|3.000|4.000|1.000|1.000|4.000|1.000|1.000",
  "Schedule|40|40|40|40|40|40|40|40|40|40|40|40|40|40|40|40",
  "Nominal diameter(in)|2|2|2|2|2|2|2|0.125|1|1|2|1|1|2|1|1",
  "Inside diameter(m)|0.053|0.053|0.053|0.053|0.053|0.053|0.053|0.007|0.027|0.027|0.053|0.027|0.027|0.053|0.027|0.027",
  "Roughness(m)|4.570E-5|4.570E-5|4.570E-5|4.570E-5|4.570E-5|4.570E-5|4.570E-5|4.570E-5|4.570E-5|4.570E-5|4.570E-5|4.570E-5|4.570E-5|4.570E-5|4.570E-5|4.570E-5",
  "Fittings K factor|0|0|0|0|0|0|0|0|0|0|0|0|0|0|0|0",
  "Eq.Length(m)|3.000|4.000|6.000|18.00|2.000|4.000|1.000|4.000|3.000|3.000|4.000|1.000|1.000|4.000|1.000|1.000",
  "Flowrate(m³/h)|3.100|1.707|6.000|6.000|6.000|6.000|7.103|6.000|1.697|2.100|1.000|1.000|1.000|1.000|1.000|1.000",
  "Velocity(m/s)|0.399|0.220|0.770|0.770|0.770|0.770|0.922|43.39|0.842|1.041|0.128|0.499|0.499|0.128|0.499|0.499",
  "Friction factor|0.027|0.030|0.024|0.024|0.024|0.024|0.024|0.034|0.029|0.028|0.035|0.031|0.031|0.035|0.031|0.031",
  "Pressure loss(bar)|-0.387|9.082E-4|0.008|0.024|1.668|0.005|-0.085|99.54|-0.279|-0.178|-0.389|0.197|0.001|-0.391|0.197|0.001",
  "Friction loss/length(bar/m)|4.577E-4|2.081E-4|0.001|0.001|0.001|0.001|0.002|20.85|0.005|0.006|5.444E-5|0.001|0.001|5.444E-5|0.001|0.001",
  "Elevation change(m)|-4.000|0|0|0|17.00|0|-9.000|-17.00|-3.000|-2.000|-4.000|2.000|0|-4.000|2.000|0",
  "Static head loss(bar)|-0.389|0|0|0|1.665|0|-0.089|-1.665|-0.293|-0.196|-0.389|0.196|0|-0.391|0.196|0",
  "Friction loss(bar)|0.002|9.082E-4|0.008|0.024|0.003|0.005|0.004|101.2|0.014|0.017|2.177E-4|0.001|0.001|2.177E-4|0.001|0.001",
  "Momentum (Pa)|158.9|50.67|592.9|592.9|592.9|592.9|848.7|1.04E+6|680.5|1100|16.47|247.4|247.4|16.47|247.4|247.4",
  "K value|0.376|0.298|0.281|0.843|0.094|0.188|0.051|1.954|0.820|0.017|0.275|0.119|0.119|0.275|0.119|0.119",
  "Status|Normal|Normal|Normal|Normal|Normal|Normal|Normal|Normal|Normal|Normal|Normal|Normal|Normal|Normal|Normal|Normal",
].map((r) => r.split("|"));

function Flowsheet() {
  return (
    <main className="mr-[2px] ml-[2px] flex w-[1269px] shrink-0 flex-col border border-[#b0b2b8]">
      <div className="flex h-[22px] shrink-0 items-stretch border-b border-[#dcdce0] pl-px">
        <div className="w-[97px] border-b-2 border-[#7b8ba8] bg-[#f1f1f3] pl-[10px] pt-[5px] text-[10.4px] leading-[14px] text-[#222]">
          Main Flowsheet
        </div>
      </div>
      <div className="flex h-[708px] shrink-0">
        <div className="relative ml-px w-[1253px] shrink-0 overflow-hidden bg-[#fefefe]">
          <div className="-mt-px">
            <Diagram />
          </div>
          <MiniTable
            pos="left-[175px] top-[106px] h-[24px] w-[48px] text-[3.4px]"
            cols="grid-cols-[30px_1fr]"
            rows={[["Name", "Tank"], ["Tank elevation(m)", "17.00"], ["Liquid level(m)", "0.100"], ["Tank press.(bar)", "1.013"]]}
          />
          <MiniTable
            pos="left-[486px] top-[70px] h-[58px] w-[54px] text-[3.7px]"
            cols="grid-cols-[34px_1fr]"
            rows={[
              ["Name", "Pump2"], ["Calculation mode", "1"], ["Control target", "Flowrate"], ["Flowrate(m³/h)", "6.000"], ["Pressure rise(bar)", "100.8"],
              ["Relative speed", "1.000"], ["Head(m)", "1031"], ["Power(kW)", "16.81"], ["NPSHa(m)", "1.008"], ["Outlet press.(bar)", "2.329"],
            ]}
          />
          <MiniTable pos="left-[491px] top-[169px] h-[107px] w-[356px] text-[3.8px]" cols="grid-cols-[42px_repeat(16,1fr)]" rows={bigTable} />
          <MiniTable
            pos="left-[438px] top-[516px] h-[23px] w-[39px] text-[3.1px]"
            cols="grid-cols-[25px_1fr]"
            rows={[["Name", "NT1"], ["Elevation(m)", "0.0"], ["Pressure(bar)", "1.3"], ["Flow rate(m³/h)", "1.0"]]}
          />
        </div>
        <div className="flex flex-1 flex-col bg-[#f1f1f2] pt-[336px]">
          <div className="h-[51px] bg-[#cfcfd1]" />
        </div>
      </div>
      <div className="flex flex-1 bg-[#f1f1f2] pl-[619px]">
        <div className="h-[12px] w-[76px] bg-[#cfcfd1]" />
      </div>
    </main>
  );
}

/* ---------- right parameters panel ---------- */

const inputs = [
  ["Type", "Pump", ""],
  ["Name", "Pump1", ""],
  ["Upstream node", "35", ""],
  ["Downstream n...", "36", ""],
  ["Calculation mo...", "Sizing", ""],
  ["Control target", "Flowrate", ""],
  ["Set point", "6.0", "m³/h"],
];
const results = [
  ["Flowrate", "6.000", "m³/h"],
  ["Pressure rise", "0.038", "bar"],
  ["Relative speed", "1.000", ""],
  ["Head", "0.389", "m"],
  ["Power", "0.006", "kW"],
  ["NPSHa", "27.11", "m"],
  ["Outlet pressure", "2.721", "bar"],
];

function ParamTable({ title, rows, box }: { title: string; rows: string[][]; box: string }) {
  return (
    <section className={`flex shrink-0 flex-col border border-[#cfcfd5] pr-[11px] ${box}`}>
      <div className="grid h-[23px] shrink-0 grid-cols-[90px_83px_1fr] bg-[#bdbdc8]">
        <div className="flex items-center border-r border-[#b5b5c1] pl-[5px]">{title}</div>
        <div className="border-r border-[#b5b5c1]" />
      </div>
      {rows.map((r) => (
        <div key={r[0]} className="grid h-[19.25px] shrink-0 grid-cols-[90px_83px_1fr] border-b border-[#ececf0]">
          <div className="flex items-center border-r border-[#ececf0] pl-[7px]">{r[0]}</div>
          <div className="flex items-center border-r border-[#ececf0] pl-[2px]">{r[1]}</div>
          <div className="flex items-center border-r border-[#dcdce0] pl-[3px]">{r[2]}</div>
        </div>
      ))}
    </section>
  );
}

function Params() {
  return (
    <aside className="flex min-w-0 flex-1 flex-col border border-[#b0b2b8] text-[10.4px] whitespace-nowrap text-[#1c1c20]">
      <div className="flex h-[28px] shrink-0 justify-between border-b border-[#d0d0d5] pl-[2px] pr-[4px]">
        <span className="pt-[7px] leading-[14px]">Link parameters</span>
        <Svg w={6} h={18}>
          <path d="M1 5L4.5 8.7L1 12.4" stroke="#111" strokeWidth="1.8" />
        </Svg>
      </div>
      <ParamTable title="Inputs" rows={inputs} box="mt-[1px] ml-[3px] h-[354px]" />
      <ParamTable title="Results" rows={results} box="mt-[3px] ml-[3px] h-[353px]" />
    </aside>
  );
}

/* ---------- floating links table ---------- */

const pipes: [string, string][] = [
  ["4", "2"], ["4", "2"], ["4", "2"], ["3", "1"], ["1", "1"], ["1", "1"], ["3", "1"],
  ["4", "2"], ["4", "2"], ["4", "2"], ["1", "1"], ["1", "1"], ["3", "1"], ["4", "2"],
];
const COLS = "grid grid-cols-[38px_67px_67px_98px_101px_104px_82px_77px]";

function LinksWindow() {
  return (
    <div className="absolute left-[685px] top-[400px] flex h-[411px] w-[653px] flex-col border border-[#a9abae] bg-[#f7f7f9] text-[10.5px] whitespace-nowrap shadow-[0_4px_14px_rgba(0,0,0,0.38)]">
      <div className="flex h-[26px] shrink-0 items-center border-b border-[#d5d8da] bg-white pl-[7px]">
        <Svg w={12} h={12}>
          <circle cx="6" cy="6" r="5" stroke="#e8683a" strokeWidth="1.5" fill="#fff" />
          <circle cx="6" cy="5.5" r="3.3" fill="#2a7ab8" />
          <path d="M6 2L7 5L9 5.5L7 6.5L6 9L5 6.5L3 5.5L5 5Z" fill="#174f80" />
        </Svg>
        <span className="ml-[8px] pt-px font-['Open_Sans','Noto_Sans',sans-serif] text-[9.6px] text-[#858585]">Links Table</span>
        <div className="flex-1" />
        <div className="flex items-center gap-[28px] pr-[14px]">
          <Svg w={9} h={9}><path d="M0 4.5H9" stroke="#888" /></Svg>
          <Svg w={9} h={9}><rect x="0.5" y="0.5" width="8" height="8" stroke="#777" /></Svg>
          <Svg w={9} h={9}><path d="M0.5 0.5L8.5 8.5M8.5 0.5L0.5 8.5" stroke="#777" /></Svg>
        </div>
      </div>
      <div className="flex h-[32px] shrink-0 items-center pl-[2px] pt-[4px]">
        <div className="flex h-[19px] w-[109px] items-center justify-between border border-[#b9b9c0] bg-white pl-[5px] pr-[4px] text-[#111]">
          Pipe
          <Caret />
        </div>
        <div className="ml-[21px]"><Floppy size={13} /></div>
      </div>
      <div className="ml-[2px] flex min-h-0 flex-1">
        <div className="flex w-[634px] flex-col overflow-hidden bg-white">
          <div className={`${COLS} h-[28px] shrink-0 bg-[#bdbdc8] pt-px text-[#111]`}>
            {["node", "Length(m)", "Schedule", "Nominal diameter", "Inside diameter(m)", "Material", "Roughness(m)", "Fittings K factor"].map((h, i) => (
              <div key={h} className={`flex items-center border-r border-[#b3b3be] ${i === 0 ? "pl-[2px]" : "pl-px"}`}>
                {i === 7 ? <span className="tracking-[-0.1px]">{h}</span> : h}
              </div>
            ))}
          </div>
          {pipes.map(([len, nom], i) => {
            const cells = ["", len, "40", nom, nom === "2" ? "0.0525" : "0.02664", "Commercial Steel", "0.00005", "0"];
            return (
              <div key={i} className={`${COLS} h-[22.6px] shrink-0 border-b border-[#e9e9e4] text-[#1c1ccc]`}>
                {cells.map((c, j) =>
                  i === 2 && j === 2 ? (
                    <div key={j} className="flex items-center justify-between border-r border-l border-[#e9e9e4] pl-[5px] pr-[3px] text-[9.8px] text-[#222]">
                      40
                      <svg width="7" height="4" viewBox="0 0 7 4"><path d="M0 0H7L3.5 4Z" fill="#555" /></svg>
                    </div>
                  ) : (
                    <div key={j} className={`flex items-center border-r border-[#e9e9e4] pl-[4px] pt-px ${j === 7 ? "text-[#222]" : ""}`}>{c}</div>
                  )
                )}
              </div>
            );
          })}
        </div>
        <div className="ml-px w-[12px] bg-[#f0f0f1] pt-[2px]">
          <div className="h-[118px] bg-[#cdcdcf]" />
        </div>
      </div>
      <div className="ml-[2px] flex h-[12px] shrink-0 bg-[#f0f0f1] pl-[61px]">
        <div className="h-full w-[183px] bg-[#cdcdcf]" />
      </div>
    </div>
  );
}

export default function App() {
  return (
    <div className="relative flex h-[828px] w-[1600px] flex-col overflow-hidden bg-[#f7f7fa] font-['Liberation_Sans',Arial,sans-serif]">
      <nav className="flex h-[20px] shrink-0 items-center bg-white text-[10.4px] text-[#111]">
        <span className="w-[42px] pl-[3px]">File</span>
        <span className="w-[39px]">Edit</span>
        <span className="w-[48px]">Tools</span>
        <span className="w-[67px]">Database</span>
        <span>Help</span>
      </nav>
      <Ribbon />
      <div className="flex h-[743px] shrink-0">
        <Palette />
        <Flowsheet />
        <Params />
      </div>
      <LinksWindow />
    </div>
  );
}
